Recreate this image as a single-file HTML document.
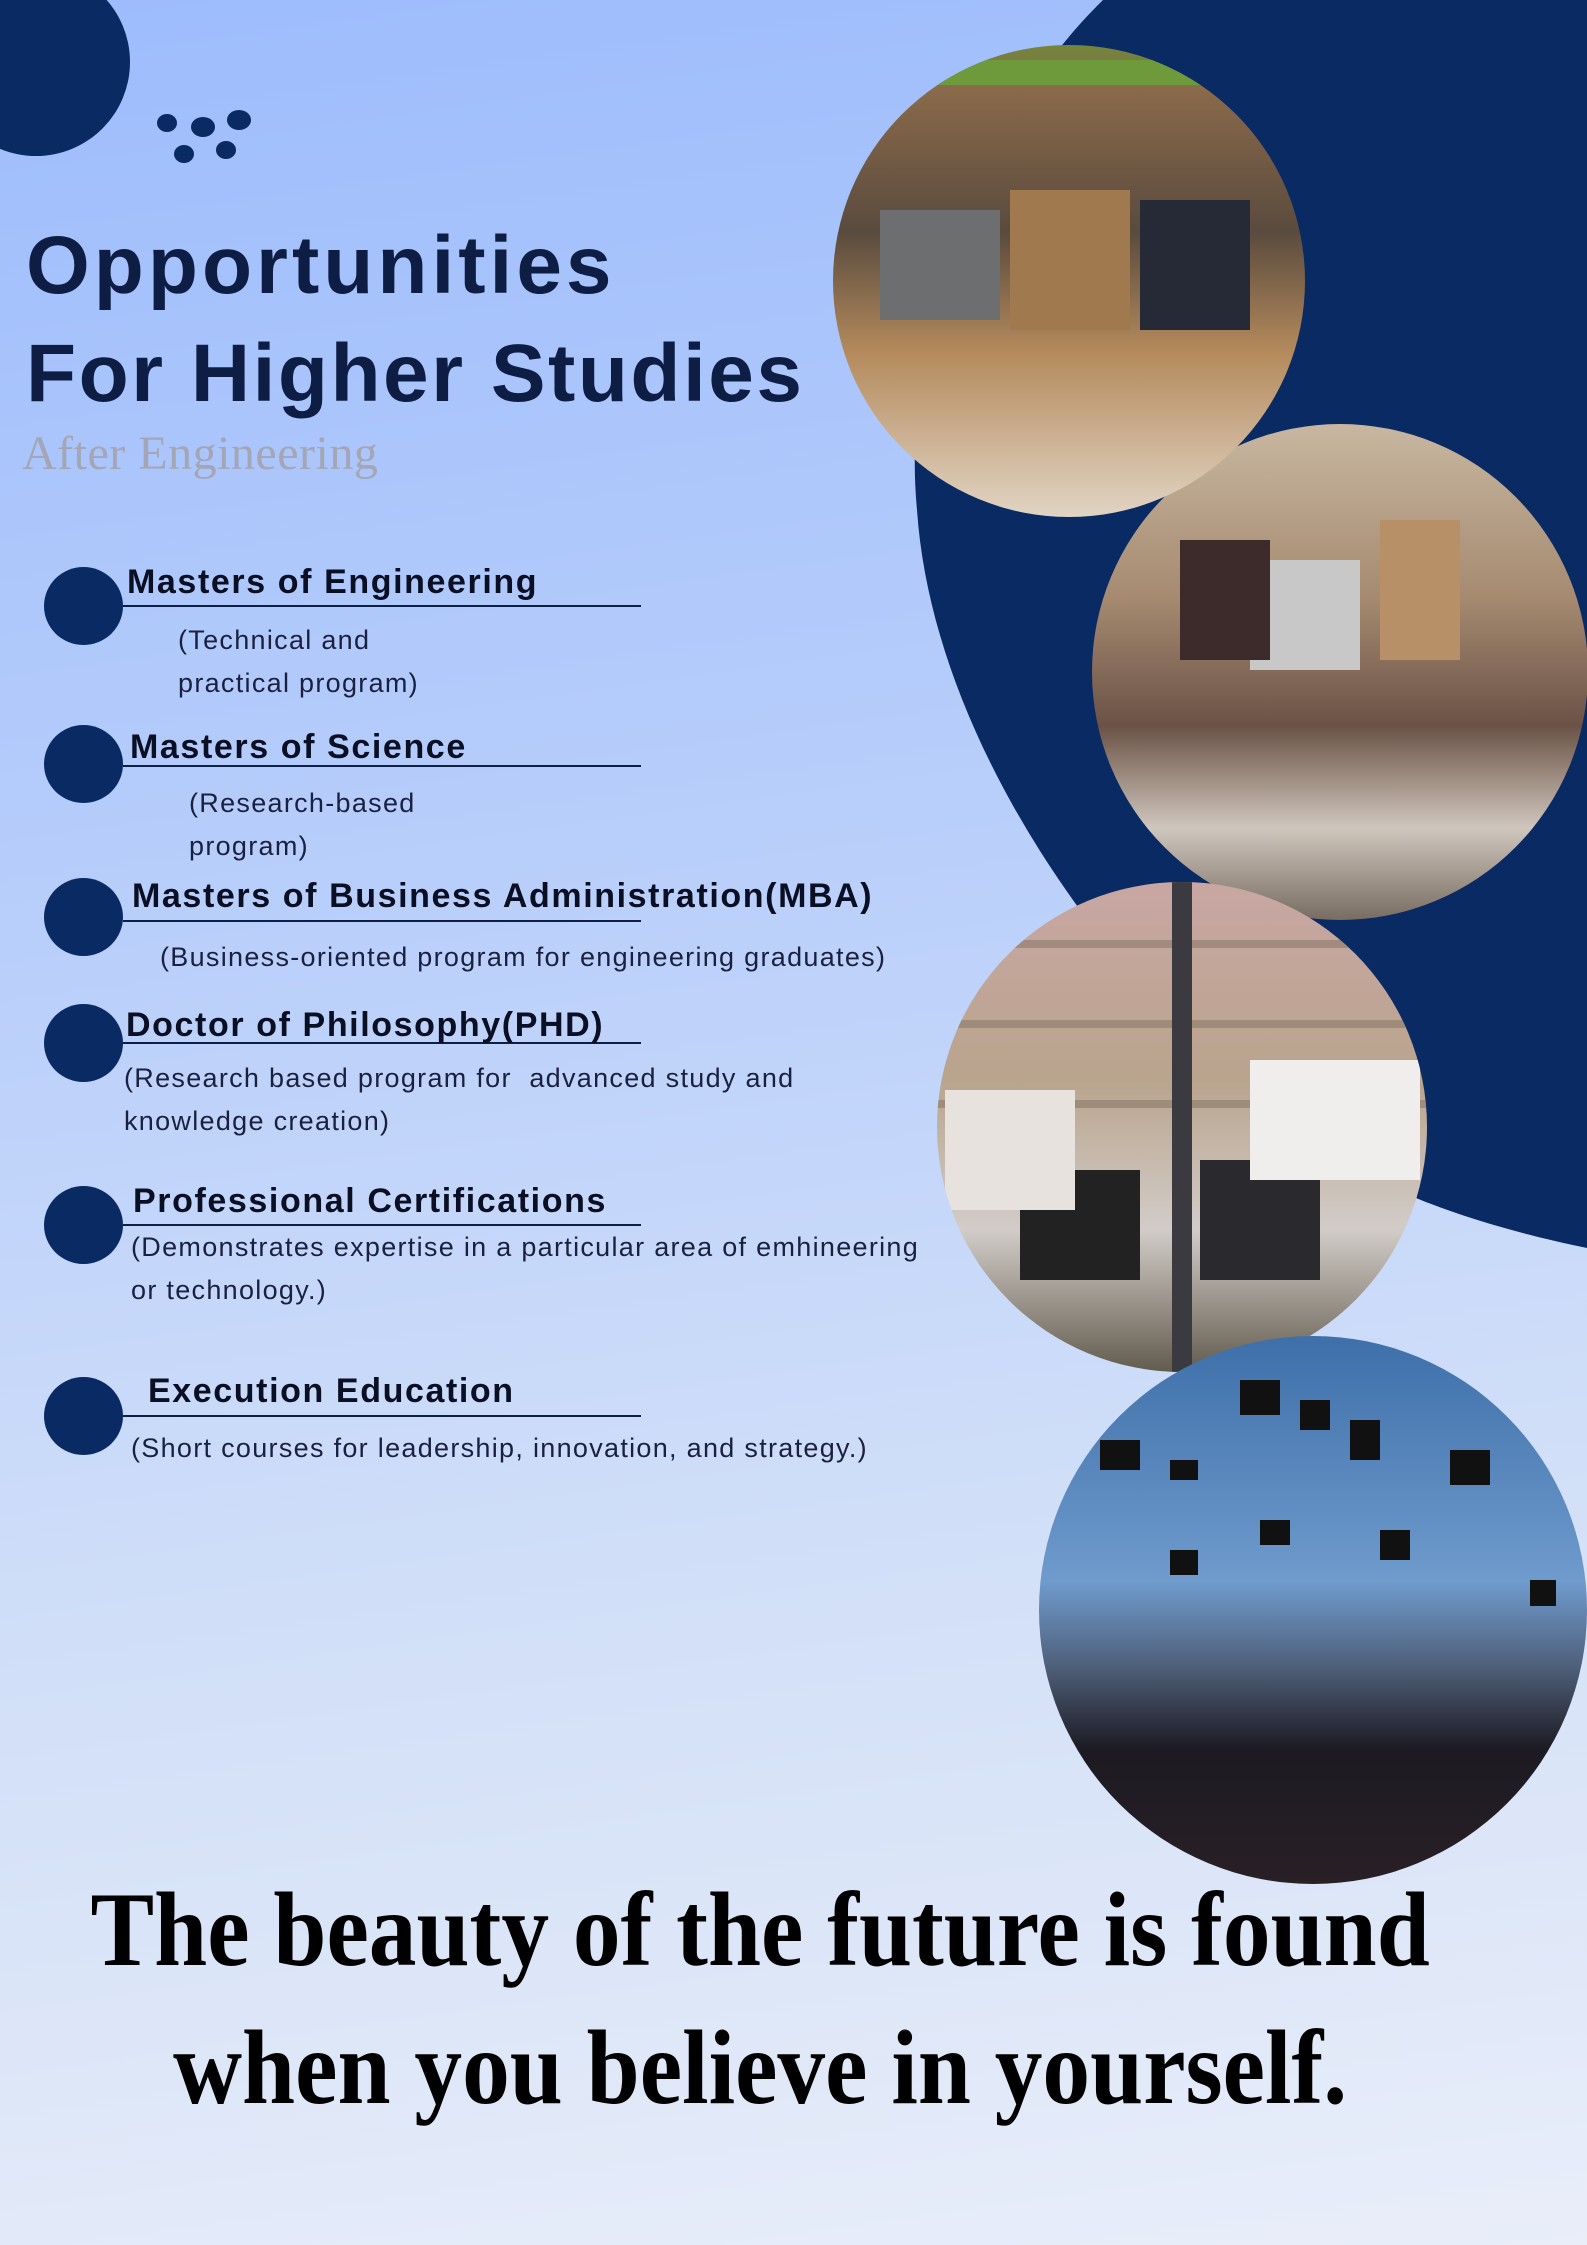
<!DOCTYPE html>
<html><head><meta charset="utf-8"><style>
html,body{margin:0;padding:0}
body{width:1587px;height:2245px;overflow:hidden;position:relative;background:linear-gradient(172deg,#9dbcfc 0%,#b6cdfb 35%,#d3e0f8 70%,#e9eef9 100%)}
svg{position:absolute;left:0;top:0}
.h{position:absolute;font-size:34px;font-weight:bold;white-space:nowrap;color:#0a0f24;letter-spacing:1.6px}
.s{position:absolute;font-size:27px;line-height:43px;white-space:nowrap;color:#1a2140;letter-spacing:1.3px}
.c{position:absolute;left:44px;width:79px;height:78px;border-radius:50%;background:#0a2a64}
.u{position:absolute;left:123px;width:518px;height:2px;background:#0d1f45}
.q{position:absolute;left:-30px;width:1587px;text-align:center;font-family:'Liberation Serif',serif;font-weight:bold;font-size:106px;line-height:106px;color:#000;transform:scaleX(0.9);transform-origin:760px 0;white-space:nowrap}
</style></head><body>
<svg width="1587" height="2245" viewBox="0 0 1587 2245">
<defs>
<clipPath id="c1"><circle cx="1069" cy="281" r="236"/></clipPath>
<clipPath id="c2"><circle cx="1340" cy="672" r="248"/></clipPath>
<clipPath id="c3"><circle cx="1182" cy="1127" r="245"/></clipPath>
<clipPath id="c4"><circle cx="1313" cy="1610" r="274"/></clipPath>
<linearGradient id="g1" x1="0" y1="0" x2="0" y2="1"><stop offset="0" stop-color="#6f8a3a"/><stop offset=".1" stop-color="#8a6a4a"/><stop offset=".4" stop-color="#5a4b3e"/><stop offset=".65" stop-color="#b48a5c"/><stop offset="1" stop-color="#e2d6c6"/></linearGradient>
<linearGradient id="g2" x1="0" y1="0" x2="0" y2="1"><stop offset="0" stop-color="#c9b8a2"/><stop offset=".35" stop-color="#a58a70"/><stop offset=".6" stop-color="#6b5246"/><stop offset=".8" stop-color="#cfc6bd"/><stop offset="1" stop-color="#6f6358"/></linearGradient>
<linearGradient id="g3" x1="0" y1="0" x2="0" y2="1"><stop offset="0" stop-color="#c9a7a4"/><stop offset=".4" stop-color="#b9a48d"/><stop offset=".7" stop-color="#d2ccc8"/><stop offset="1" stop-color="#5c5648"/></linearGradient>
<linearGradient id="g4" x1="0" y1="0" x2="0" y2="1"><stop offset="0" stop-color="#3d6ea8"/><stop offset=".45" stop-color="#6f9bcd"/><stop offset=".6" stop-color="#4f607a"/><stop offset=".75" stop-color="#1c1a22"/><stop offset="1" stop-color="#2a2026"/></linearGradient>
</defs>
<path d="M1103,0 C980,120 900,330 917,510 C930,700 1050,900 1200,1050 C1290,1140 1380,1205 1587,1248 L1587,0 Z" fill="#0a2a64"/>
<circle cx="36" cy="62" r="94" fill="#0a2a64"/>
<g fill="#0a2a64"><ellipse cx="167" cy="123" rx="10" ry="9"/><ellipse cx="203" cy="127" rx="12" ry="10"/><ellipse cx="239" cy="120" rx="12" ry="10"/><ellipse cx="184" cy="154" rx="10" ry="9"/><ellipse cx="226" cy="150" rx="10" ry="9"/></g>

<g clip-path="url(#c2)"><rect x="1080" y="420" width="520" height="510" fill="url(#g2)"/>
<rect x="1380" y="520" width="80" height="140" fill="#b89068"/><rect x="1250" y="560" width="110" height="110" fill="#c8c8c8"/><rect x="1180" y="540" width="90" height="120" fill="#3d2a2a"/></g>
<g clip-path="url(#c1)"><rect x="830" y="40" width="480" height="480" fill="url(#g1)"/>
<rect x="1010" y="190" width="120" height="140" fill="#a07a4e"/><rect x="880" y="210" width="120" height="110" fill="#6c6e70"/><rect x="1140" y="200" width="110" height="130" fill="#262a36"/><rect x="830" y="60" width="480" height="25" fill="#6e9a3c"/></g>
<g clip-path="url(#c3)"><rect x="930" y="880" width="510" height="500" fill="url(#g3)"/>
<g fill="#8a7a6a" opacity=".6"><rect x="930" y="940" width="510" height="8"/><rect x="930" y="1020" width="510" height="8"/><rect x="930" y="1100" width="510" height="8"/></g>
<rect x="1172" y="880" width="20" height="500" fill="#3a3a40"/><rect x="1200" y="1160" width="120" height="120" fill="#2a2a2e"/><rect x="1020" y="1170" width="120" height="110" fill="#222"/><rect x="1250" y="1060" width="170" height="120" fill="#f0eeec"/><rect x="945" y="1090" width="130" height="120" fill="#e8e2de"/></g>
<g clip-path="url(#c4)"><rect x="1030" y="1330" width="560" height="560" fill="url(#g4)"/>
<g fill="#111"><rect x="1240" y="1380" width="40" height="35"/><rect x="1300" y="1400" width="30" height="30"/><rect x="1100" y="1440" width="40" height="30"/><rect x="1350" y="1420" width="30" height="40"/><rect x="1450" y="1450" width="40" height="35"/><rect x="1260" y="1520" width="30" height="25"/><rect x="1170" y="1550" width="28" height="25"/><rect x="1530" y="1580" width="26" height="26"/><rect x="1170" y="1460" width="28" height="20"/><rect x="1380" y="1530" width="30" height="30"/></g></g>
</svg>

<div style="position:absolute;left:0;top:0;width:1587px;height:2245px;font-family:'Liberation Sans',sans-serif;color:#0d1f45">
<div style="position:absolute;left:26px;top:226px;font-size:82px;font-weight:bold;line-height:80px;letter-spacing:4px;color:#0e1d44">Opportunities</div>
<div style="position:absolute;left:26px;top:334px;font-size:82px;font-weight:bold;line-height:80px;letter-spacing:2.5px;color:#0e1d44">For Higher Studies</div>
<div style="position:absolute;left:22px;top:426px;font-family:'Liberation Serif',serif;font-size:48px;line-height:56px;color:#a4a6b6;letter-spacing:0.5px">After Engineering</div>
</div>

<div style="position:absolute;left:0;top:0;font-family:'Liberation Sans',sans-serif;color:#0d1f45">
<div class="c" style="top:567px"></div>
<div class="c" style="top:725px"></div>
<div class="c" style="top:878px"></div>
<div class="c" style="top:1004px"></div>
<div class="c" style="top:1186px"></div>
<div class="c" style="top:1377px"></div>
<div class="u" style="top:605px"></div>
<div class="u" style="top:765px"></div>
<div class="u" style="top:920px"></div>
<div class="u" style="top:1042px"></div>
<div class="u" style="top:1224px"></div>
<div class="u" style="top:1415px"></div>
<div class="h" style="left:127px;top:563px">Masters of Engineering</div>
<div class="h" style="left:130px;top:728px">Masters of Science</div>
<div class="h" style="left:132px;top:877px">Masters of Business Administration(MBA)</div>
<div class="h" style="left:126px;top:1006px">Doctor of Philosophy(PHD)</div>
<div class="h" style="left:133px;top:1182px">Professional Certifications</div>
<div class="h" style="left:148px;top:1372px">Execution Education</div>
<div class="s" style="left:178px;top:619px">(Technical and<br>practical program)</div>
<div class="s" style="left:189px;top:782px">(Research-based<br>program)</div>
<div class="s" style="left:160px;top:936px">(Business-oriented program for engineering graduates)</div>
<div class="s" style="left:124px;top:1057px">(Research based program for&nbsp; advanced study and<br>knowledge creation)</div>
<div class="s" style="left:131px;top:1226px">(Demonstrates expertise in a particular area of emhineering<br>or technology.)</div>
<div class="s" style="left:131px;top:1427px">(Short courses for leadership, innovation, and strategy.)</div>
</div>

<div class="q" style="top:1877px">The beauty of the future is found</div>
<div class="q" style="top:2015px">when you believe in yourself.</div>
</body></html>
